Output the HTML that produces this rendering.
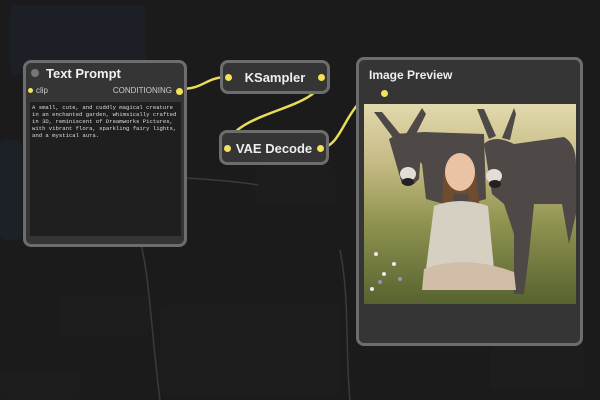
<!DOCTYPE html>
<html><head><style>
body{margin:0;width:600px;height:400px;background:#1b1b1b;overflow:hidden;position:relative;font-family:"Liberation Sans",sans-serif}
.n{position:absolute;background:#353535;border:3px solid #6d6d6d;border-radius:8px;box-sizing:border-box;color:#eee}
.f{position:absolute;background:#202020;border-radius:6px;opacity:.5}
.dot{position:absolute;width:7px;height:7px;border-radius:50%;background:#f2e35a}
</style></head><body>
<div class="f" style="left:10px;top:5px;width:136px;height:70px;background:#1d2430"></div>
<div class="f" style="left:0;top:140px;width:22px;height:100px;background:#1e2733"></div>
<div class="f" style="left:255px;top:165px;width:80px;height:40px"></div>
<div class="f" style="left:60px;top:295px;width:90px;height:40px"></div>
<div class="f" style="left:160px;top:305px;width:180px;height:90px"></div>
<div class="f" style="left:490px;top:340px;width:95px;height:50px"></div>
<div class="f" style="left:0;top:370px;width:80px;height:30px"></div>
<svg style="position:absolute;left:0;top:0" width="600" height="400">
<g stroke="#3a3a3a" stroke-width="1.5" fill="none"><path d="M186 178 C220 180 240 182 258 185"/><path d="M140 240 C150 280 150 320 160 400"/><path d="M340 250 C350 300 345 350 350 400"/></g>
<g stroke="#e8dc5a" stroke-width="2.5" fill="none"><path d="M180 89 C205 89 205 77 228 77"/><path d="M321 77 C325 110 232 110 227 147"/><path d="M320 148 C345 148 345 95 382 92"/></g>
</svg>
<div class="n" style="left:23px;top:60px;width:164px;height:187px">
<div style="position:absolute;left:5px;top:6px;width:8px;height:8px;border-radius:50%;background:#777"></div>
<div style="position:absolute;left:20px;top:3px;font-size:13px;font-weight:bold;color:#f0f0f0">Text Prompt</div>
<div class="dot" style="left:2px;top:25px;width:5px;height:5px"></div>
<div style="position:absolute;left:10px;top:23px;font-size:8px;color:#ccc">clip</div>
<div style="position:absolute;right:12px;top:23px;font-size:8px;color:#ccc">CONDITIONING</div>
<div class="dot" style="right:1px;top:25px"></div>
<div style="position:absolute;left:4px;top:39px;width:151px;height:134px;background:#1f1f1f;font:5.6px 'Liberation Mono',monospace;color:#ddd;padding:2px;box-sizing:border-box;line-height:7px">A small, cute, and cuddly magical creature in an enchanted garden, whimsically crafted in 3D, reminiscent of Dreamworks Pictures, with vibrant flora, sparkling fairy lights, and a mystical aura.</div>
</div>
<div class="n" style="left:220px;top:60px;width:110px;height:34px"><div style="text-align:center;font-size:13px;font-weight:bold;margin-top:7px">KSampler</div></div>
<div class="dot" style="left:225px;top:74px"></div><div class="dot" style="left:318px;top:74px"></div>
<div class="n" style="left:219px;top:130px;width:110px;height:35px"><div style="text-align:center;font-size:13px;font-weight:bold;margin-top:8px">VAE Decode</div></div>
<div class="dot" style="left:224px;top:145px"></div><div class="dot" style="left:317px;top:145px"></div>
<div class="n" style="left:356px;top:57px;width:227px;height:289px">
<div style="position:absolute;left:10px;top:8px;font-size:12px;font-weight:bold">Image Preview</div>
<div class="dot" style="left:22px;top:30px"></div>
<svg style="position:absolute;left:5px;top:44px" width="212" height="200">
<defs><linearGradient id="g" x1="0" y1="0" x2="0" y2="1"><stop offset="0" stop-color="#e2d9ad"/><stop offset=".3" stop-color="#c4ba83"/><stop offset=".6" stop-color="#8f924f"/><stop offset="1" stop-color="#56632f"/></linearGradient></defs>
<rect width="212" height="200" fill="url(#g)"/>
<g fill="#4e4946">
<path d="M30 30 L60 28 L120 30 L122 95 L105 100 L95 135 L85 135 L80 100 L62 95 L58 60 Z"/>
<path d="M25 35 Q40 25 58 35 L55 75 L50 80 L38 80 Z"/>
<path d="M10 8 L30 35 L36 30 L18 8Z"/><path d="M58 4 L42 30 L50 34 L62 10Z"/>
<path d="M120 40 Q130 30 150 40 L200 33 Q212 40 212 60 L212 110 L205 140 L198 100 L170 100 L165 150 L160 190 L150 190 L150 130 L140 100 L128 90 Z"/>
<path d="M113 5 L125 35 L132 32 L120 5Z"/><path d="M150 4 L138 34 L146 36 L152 10Z"/>
</g>
<g fill="#e2ddd5"><ellipse cx="44" cy="70" rx="8" ry="7"/><ellipse cx="130" cy="72" rx="8" ry="7"/></g>
<g fill="#222"><ellipse cx="44" cy="78" rx="6" ry="4"/><ellipse cx="131" cy="80" rx="6" ry="4"/></g>
<path d="M80 70 Q96 40 112 70 L118 125 L108 125 L104 90 L90 90 L86 125 L76 125 Z" fill="#6e4c30"/>
<ellipse cx="96" cy="68" rx="15" ry="19" fill="#e9c3a4"/>
<path d="M70 102 Q96 92 124 102 L130 165 L62 165 Z" fill="#d6d0c2"/>
<path d="M60 165 Q100 150 150 168 L152 186 L58 186 Z" fill="#d2bda8"/>
<g fill="#ece8f0"><circle cx="12" cy="150" r="2"/><circle cx="20" cy="170" r="2"/><circle cx="8" cy="185" r="2"/><circle cx="30" cy="160" r="2"/></g>
<g fill="#a58ac0"><circle cx="16" cy="178" r="2"/><circle cx="36" cy="175" r="2"/></g>
</svg>
</div>
</body></html>
